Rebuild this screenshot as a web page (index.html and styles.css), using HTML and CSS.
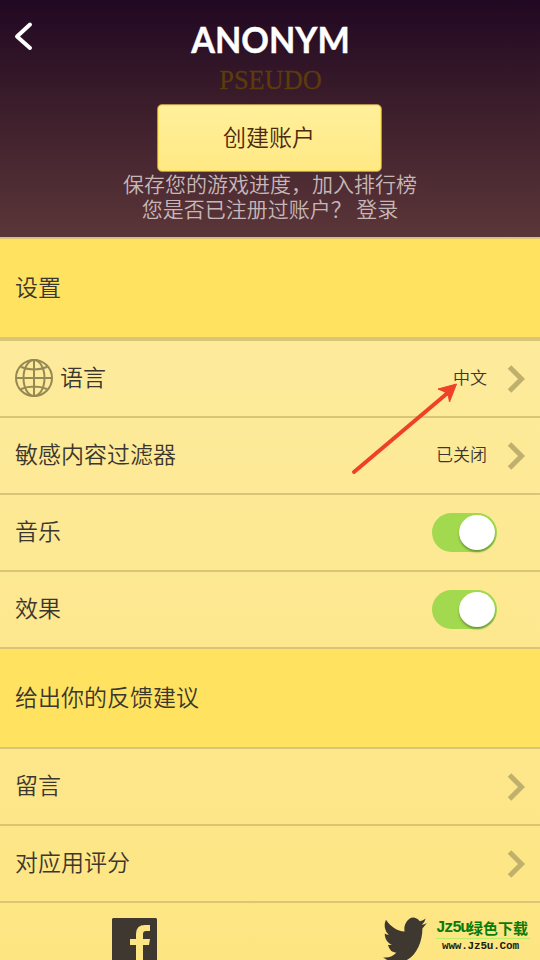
FILE: index.html
```html
<!DOCTYPE html>
<html lang="zh-CN">
<head>
<meta charset="utf-8">
<title>设置</title>
<link rel="stylesheet" href="styles.css">
</head>
<body>
<main class="screen">
  <header class="profile">
    <svg class="back" viewBox="0 0 20 30"><path d="M16 3.500L3 15.500L16 27"/></svg>
    <h1 class="name">ANONYM</h1>
    <div class="pseudo">PSEUDO</div>
    <button class="create">创建账户</button>
    <p class="hint">保存您的游戏进度，加入排行榜<br>您是否已注册过账户？&nbsp;登录</p>
  </header>
  <section class="heading heading-main">设置</section>
  <div class="row">
    <svg class="globe" viewBox="0 0 38 38"><circle cx="19" cy="19" r="18"/><ellipse cx="19" cy="19" rx="10.500" ry="18"/><path d="M19 1V37M1 19H37M6 8Q19 13 32 8M6 30Q19 25 32 30"/></svg>
    <span class="label">语言</span><span class="value">中文</span>
    <svg class="chevron" viewBox="0 0 18 28"><path d="M2.500 2L14.500 14L2.500 26"/></svg>
  </div>
  <div class="row">
    <span class="label">敏感内容过滤器</span><span class="value">已关闭</span>
    <svg class="chevron" viewBox="0 0 18 28"><path d="M2.500 2L14.500 14L2.500 26"/></svg>
  </div>
  <div class="row"><span class="label">音乐</span><span class="toggle"><i></i></span></div>
  <div class="row"><span class="label">效果</span><span class="toggle"><i></i></span></div>
  <section class="heading">给出你的反馈建议</section>
  <div class="row"><span class="label">留言</span>
    <svg class="chevron" viewBox="0 0 18 28"><path d="M2.500 2L14.500 14L2.500 26"/></svg>
  </div>
  <div class="row"><span class="label">对应用评分</span>
    <svg class="chevron" viewBox="0 0 18 28"><path d="M2.500 2L14.500 14L2.500 26"/></svg>
  </div>
  <footer class="social">
    <svg class="facebook" viewBox="0 0 45 45"><path d="M1 0H44L45 1V45H31V27H37L38 21H31V16Q31 13 34 13H38V7H33Q24 7 24 16V21H18V27H24V45H0V1Z"/></svg>
    <svg class="twitter" viewBox="0 0 24 20" preserveAspectRatio="none"><path d="M23.950 2.570a10 10 0 0 1-2.820.780 4.900 4.900 0 0 0 2.160-2.720c-.950.550-2 .950-3.130 1.180a4.920 4.920 0 0 0-8.380 4.480C7.690 6.100 4.070 4.130 1.640 1.160a4.820 4.820 0 0 0 1.520 6.570 4.900 4.900 0 0 1-2.220-.610v.060c0 2.380 1.700 4.370 3.940 4.830a5 5 0 0 1-2.210.080 4.940 4.940 0 0 0 4.600 3.420A9.870 9.870 0 0 1 0 17.540C2.200 18.900 4.800 19.740 7.550 19.740C16.600 19.740 21.500 12.200 21.500 5z"/></svg>
    <div class="brand"><div class="brand-name"><span>Jz5u</span><b>绿色下载</b></div><div class="brand-url">www.Jz5u.Com</div></div>
  </footer>
  <svg class="arrow" viewBox="0 0 108 94"><path class="shaft" d="M4 90L97 11.500"/><path class="tip" d="M106.500 2L88 7L95 10L98.500 14.500L99.500 20Z"/></svg>
</main>
</body>
</html>
```
FILE: styles.css
```css
* { box-sizing: border-box; }
body { margin: 0; font-family: "Noto Sans CJK SC", sans-serif; font-weight: 350; color: #3c372e; }
.screen {
  position: relative; width: 540px; height: 960px; overflow: hidden;
  display: flex; flex-direction: column;
  background: linear-gradient(#fdeb9c 341px, #fde582 960px);
}
.profile {
  position: relative; height: 237px; flex: none;
  display: flex; flex-direction: column; align-items: center;
  background: linear-gradient(#210822, #3a1c2a 42%, #5b3639);
}
.back { position: absolute; left: 14px; top: 21px; width: 20px; height: 30px; fill: none; stroke: #fff; stroke-width: 4; stroke-linecap: round; stroke-linejoin: round; }
.name { margin: 17px 0 0; height: 45px; font: 700 36px/44px Lato, sans-serif; color: #fff; transform: scaleX(.95); -webkit-text-stroke: .4px #fff; }
.pseudo { height: 42px; font: 28px/36px "Liberation Serif", serif; color: #5c3b0d; transform: scaleX(.94); -webkit-text-stroke: .3px #5c3b0d; }
.create {
  width: 225px; height: 68px; flex: none; padding: 0 1px 4px 0; margin-right: 1px;
  border: 1px solid #b99350; border-radius: 5px;
  background: linear-gradient(#fff09b, #ffe984);
  box-shadow: inset 0 0 0 1px #ffe25e;
  font: 350 23px/30px "Noto Sans CJK SC", sans-serif; color: #4d290d;
}
.hint { margin: -1px 0 0; line-height: 25px; font-size: 21px; text-align: center; color: #c7b8b7; white-space: nowrap; }
.heading { height: 100px; flex: none; padding: 0 15px; border: solid #d9c477; border-width: 0 0 2px; background: #ffe360; font-size: 23px; line-height: 95px; }
.heading-main { border-width: 2px 0 4px; height: 104px; }
.row { height: 77px; flex: none; padding: 0 15px; border-bottom: 2px solid #d9c477; display: flex; align-items: center; font-size: 23px; }
.label { flex: 1; line-height: 34px; margin-top: -5px; }
.globe { width: 38px; height: 38px; margin: -2px 7px 0 0; fill: none; stroke: #958954; stroke-width: 2; }
.value { font-size: 17px; line-height: 24px; margin: -4px 20px 0 0; }
.chevron { width: 18px; height: 28px; fill: none; stroke: #c0b06e; stroke-width: 5; }
.toggle { width: 65px; height: 39px; margin-right: 28px; padding: 2px 2px 0 27px; border-radius: 20px; background: #a2d94e; }
.toggle i { display: block; width: 36px; height: 35px; border-radius: 50%; background: #fff; box-shadow: 0 2px 2px #6c9b36; }
.social { flex: 1; display: flex; align-items: flex-start; padding: 15px 0 0 112px; }
.facebook { width: 45px; height: 45px; flex: none; fill: #3e3830; }
.twitter { width: 44px; height: 46px; flex: none; margin: -1px 0 0 226px; fill: #3e3830; }
.brand { width: 94px; flex: none; margin-left: 9px; }
.brand-name { display: flex; height: 21px; line-height: 19px; border-bottom: 1px solid #b9ee65; color: #087c0b; white-space: nowrap; font-size: 15px; }
.brand-name span { font: 700 16px/20px "Liberation Mono", monospace; width: 32px; letter-spacing: -1.500px; }
.brand-name b { font-weight: 700; }
.brand-url { font: 700 11px/14px "Liberation Mono", monospace; letter-spacing: -.2px; margin-left: 6px; color: #17220e; white-space: nowrap; }
.arrow { position: absolute; left: 350px; top: 382px; width: 108px; height: 94px; }
.shaft { fill: none; stroke: #ee4128; stroke-width: 4; stroke-linecap: round; }
.tip { fill: #ee4128; stroke: #ee4128; stroke-width: 1; }
```
